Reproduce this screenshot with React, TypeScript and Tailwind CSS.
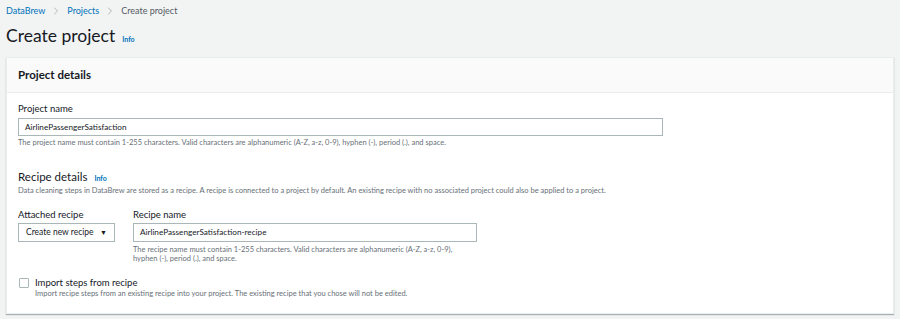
import { ChevronRight } from "lucide-react";

const font = { fontFamily: "Lato, 'Open Sans', sans-serif" };

function Info() {
  return <span className="text-[7px] font-bold text-[#0073bb] ml-[7px]">Info</span>;
}

export default function App() {
  return (
    <div style={font} className="w-[900px] h-[319px] bg-[#f2f3f3] text-[#16191f] overflow-hidden">
      {/* Breadcrumb */}
      <div className="flex items-center gap-[5px] pl-[6px] pt-[5px] text-[9px] leading-[12px]">
        <span className="text-[#0073bb]">DataBrew</span>
        <ChevronRight className="w-3 h-3 text-[#879596]" strokeWidth={1.25} />
        <span className="text-[#0073bb]">Projects</span>
        <ChevronRight className="w-3 h-3 text-[#879596]" strokeWidth={1.25} />
        <span className="text-[#545b64]">Create project</span>
      </div>

      {/* Title */}
      <div className="flex items-baseline pl-[6px] mt-[8px]">
        <h1 className="text-[17.5px] leading-[21px] text-[#16191f]">Create project</h1>
        <Info />
      </div>

      {/* Card */}
      <div className="mx-[6px] mt-[11px] bg-white border border-[#eaeded] shadow-[0_1px_1px_rgba(0,28,36,0.3)]">
        <div className="h-[35px] bg-[#fafafa] border-b border-[#eaeded] flex items-center px-[11px]">
          <h2 className="text-[11.5px] font-bold">Project details</h2>
        </div>

        <div className="px-[11px] pt-[10px] pb-[14px]">
          <div className="text-[9.5px] leading-[11px] text-[#16191f]">Project name</div>
          <div className="mt-[4px] w-[645px] h-[18px] border border-[#aab7b8] flex items-center px-[6px] text-[8.2px]">
            AirlinePassengerSatisfaction
          </div>
          <div className="mt-[2px] text-[7.5px] leading-[10px] text-[#687078]">
            The project name must contain 1-255 characters. Valid characters are alphanumeric (A-Z, a-z, 0-9), hyphen (-), period (.), and space.
          </div>

          <div className="flex items-baseline mt-[22px]">
            <h3 className="text-[11.5px] leading-[14px]">Recipe details</h3>
            <Info />
          </div>
          <div className="mt-[2px] text-[7.5px] leading-[10px] text-[#687078]">
            Data cleaning steps in DataBrew are stored as a recipe. A recipe is connected to a project by default. An existing recipe with no associated project could also be applied to a project.
          </div>

          <div className="flex gap-[18px] mt-[13px]">
            <div>
              <div className="text-[9.5px] leading-[11px]">Attached recipe</div>
              <div className="mt-[3px] w-[97px] h-[19px] border border-[#aab7b8] flex items-center justify-between px-[7px] text-[8.5px]">
                <span>Create new recipe</span>
                <span className="text-[7px]">▼</span>
              </div>
            </div>
            <div>
              <div className="text-[9.5px] leading-[11px]">Recipe name</div>
              <div className="mt-[3px] w-[344px] h-[19px] border border-[#aab7b8] flex items-center px-[6px] text-[8.2px]">
                AirlinePassengerSatisfaction-recipe
              </div>
              <div className="mt-[3px] w-[345px] text-[7.5px] leading-[9px] text-[#687078]">
                The recipe name must contain 1-255 characters. Valid characters are alphanumeric (A-Z, a-z, 0-9), hyphen (-), period (.), and space.
              </div>
            </div>
          </div>

          <div className="flex gap-[6px] mt-[14px]">
            <div className="w-[10px] h-[10px] border border-[#aab7b8] rounded-[1px] mt-[1px] ml-[1px]" />
            <div>
              <div className="text-[9.5px] leading-[11px]">Import steps from recipe</div>
              <div className="text-[7.5px] leading-[11px] text-[#687078]">
                Import recipe steps from an existing recipe into your project. The existing recipe that you chose will not be edited.
              </div>
            </div>
          </div>
        </div>
      </div>
    </div>
  );
}
